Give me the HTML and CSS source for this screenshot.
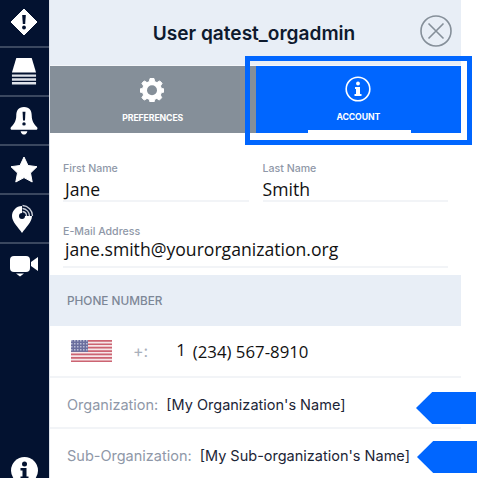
FILE: index.html
```html
<!DOCTYPE html>
<html lang="en">
<head>
    <meta charset="UTF-8">
    <meta name="viewport" content="width=device-width, initial-scale=1.0">
    <title>User qatest_orgadmin</title>
    <link rel="stylesheet" href="styles.css">
</head>
<body>
    <div class="app">
        <nav class="rail">
            <div class="rail-item rail-first">
                <svg width="28" height="28" viewBox="0 0 28 28">
                    <path d="M14 1 L27 14 L14 27 L1 14 Z" fill="#fff" stroke="#fff" stroke-width="1" stroke-linejoin="round"/>
                    <path d="M12.2 7 h3.6 l-.6 9 h-2.4 Z" fill="#031230"/>
                    <circle cx="14" cy="19.5" r="1.9" fill="#031230"/>
                </svg>
            </div>
            <div class="rail-item">
                <svg width="26" height="27" viewBox="0 0 26 28">
                    <path d="M5 0 H21 L25.500 15 H0.500 Z" fill="#fff"/>
                    <path d="M0.500 17 H25.500 V19.500 H0.500 Z M0.500 21 H25.500 V23.500 H0.500 Z M0.500 25 H25.500 V27.500 H0.500 Z" fill="#dfe3ea"/>
                </svg>
            </div>
            <div class="rail-item">
                <svg width="28" height="29" viewBox="0 0 28 30">
                    <path d="M14 1 C8 1 6 5 6 10 C6 16 3 19 0.500 22 C-0.500 23.500 0.500 24.500 1.500 24.500 H26.500 C27.500 24.500 28.500 23.500 27.500 22 C25 19 22 16 22 10 C22 5 20 1 14 1 Z" fill="#fff"/>
                    <path d="M10.500 26 H17.500 C17 28.500 15.500 29.500 14 29.500 C12.500 29.500 11 28.500 10.500 26 Z" fill="#fff"/>
                    <path d="M12.500 6 h3 l-.5 9 h-2 Z" fill="#031230"/>
                    <circle cx="14" cy="18.500" r="1.800" fill="#031230"/>
                </svg>
            </div>
            <div class="rail-item">
                <svg width="28" height="27" viewBox="0 0 28 27">
                    <path d="M14 1 L18 9.500 L27 10.700 L20.500 17 L22.200 26 L14 21.600 L5.800 26 L7.500 17 L1 10.700 L10 9.500 Z" fill="#fff" stroke="#fff" stroke-width="1" stroke-linejoin="round"/>
                </svg>
            </div>
            <div class="rail-item">
                <svg width="24" height="29" viewBox="0 0 24 29">
                    <path d="M10 2 C4 2 0 7 0 12 C0 18 6 23 10 29 C14 23 20 18 20 12 C20 7 16 2 10 2 Z" fill="#fff"/>
                    <path d="M10 12 L10 0 L24 0 L24 12 Z" fill="#031230"/>
                    <circle cx="10" cy="12" r="3" fill="#031230"/>
                    <path d="M10.500 7.500 A4.500 4.500 0 0 1 14.500 12 M10.500 4.500 A7.500 7.500 0 0 1 17.500 12 M10.500 1.500 A10.500 10.500 0 0 1 20.500 12" fill="none" stroke="#c9ced8" stroke-width="1.300"/>
                </svg>
            </div>
            <div class="rail-item rail-last">
                <svg width="28" height="26" viewBox="0 0 28 26">
                    <rect x="0" y="1" width="20" height="16" rx="4" fill="#fff"/>
                    <path d="M21 7 L28 2 V16 L21 11 Z" fill="#fff"/>
                    <path d="M6 18.500 H14 L10 21.500 Z" fill="#fff"/>
                </svg>
            </div>
            <div class="rail-foot">
                <svg width="27" height="27" viewBox="0 0 27 27">
                    <circle cx="13.500" cy="13.500" r="13.500" fill="#fff"/>
                    <circle cx="13.500" cy="7" r="2.500" fill="#031230"/>
                    <path d="M9.500 11 H15.500 V19.500 H17.500 V22 H9.500 V19.500 H11.500 V13.500 H9.500 Z" fill="#031230"/>
                </svg>
            </div>
        </nav>

        <main class="panel">
            <header class="panel-head">
                <h1 class="panel-title">User qatest_orgadmin</h1>
                <svg class="close-icon" width="32" height="32" viewBox="0 0 32 32">
                    <circle cx="16" cy="16" r="15" fill="none" stroke="#858f99" stroke-width="1.600"/>
                    <path d="M8.500 8.500 L23.500 23.500 M23.500 8.500 L8.500 23.500" stroke="#858f99" stroke-width="1.600"/>
                </svg>
            </header>

            <div class="tabs">
                <div class="tab tab-prefs">
                    <svg width="24" height="24" viewBox="0 0 24 24">
                        <path d="M10 0.500 H14 L14.600 3.600 L17 4.600 L19.700 2.900 L22.100 5.300 L20.400 8 L21.400 10.400 L24 11 V14 L21.400 14.600 L20.400 17 L21.700 19.700 L19.300 22.100 L16.800 20.400 L14.600 21.400 L14 24 H10 L9.400 21.400 L7 20.400 L4.300 22.100 L1.900 19.700 L3.600 17 L2.600 14.600 L0 14 V11 L2.600 10.400 L3.600 8 L1.900 5.300 L4.300 2.900 L7 4.600 L9.400 3.600 Z" fill="#fff" stroke="#fff" stroke-linejoin="round"/>
                        <circle cx="12" cy="12.300" r="5" fill="#858f99"/>
                    </svg>
                    <span class="tab-label">PREFERENCES</span>
                </div>
                <div class="tab tab-account">
                    <svg width="26" height="26" viewBox="0 0 26 26">
                        <circle cx="13" cy="13" r="11.800" fill="none" stroke="#fff" stroke-width="1.600"/>
                        <circle cx="13" cy="7.500" r="1.900" fill="#fff"/>
                        <path d="M10 11 H15 V18 H16.500 V20 H9.500 V18 H11 V13 H10 Z" fill="#fff"/>
                    </svg>
                    <span class="tab-label">ACCOUNT</span>
                    <span class="tab-marker"></span>
                </div>
            </div>

            <section class="form">
                <div class="field-row">
                    <div class="field">
                        <label class="field-label">First Name</label>
                        <div class="field-value">Jane</div>
                    </div>
                    <div class="field">
                        <label class="field-label">Last Name</label>
                        <div class="field-value field-value-flush">Smith</div>
                    </div>
                </div>
                <div class="field field-email">
                    <label class="field-label">E-Mail Address</label>
                    <div class="field-value">jane.smith@yourorganization.org</div>
                </div>
            </section>

            <div class="section-head">PHONE NUMBER</div>

            <div class="phone-row">
                <svg class="flag" width="41" height="22" viewBox="0 0 41 22">
                    <defs>
                        <pattern id="stars" width="3" height="3" patternUnits="userSpaceOnUse">
                            <rect width="3" height="3" fill="#6a6f9e"/>
                            <rect width="1.500" height="1.500" fill="#b9bcd4"/>
                        </pattern>
                    </defs>
                    <rect width="41" height="22" fill="#f6e6e8"/>
                    <path d="M0 0 H41 V1.700 H0 Z M0 3.400 H41 V5.100 H0 Z M0 6.800 H41 V8.500 H0 Z M0 10.200 H41 V11.900 H0 Z M0 13.600 H41 V15.300 H0 Z M0 17 H41 V18.700 H0 Z M0 20.400 H41 V22 H0 Z" fill="#cc6472"/>
                    <rect width="17" height="11.900" fill="url(#stars)"/>
                </svg>
                <span class="phone-plus">+:</span>
                <span class="phone-code">1</span>
                <span class="phone-number">(234) 567-8910</span>
            </div>

            <div class="org-row">
                <span class="org-label">Organization:</span>
                <span class="org-value">[My Organization's Name]</span>
            </div>
            <div class="org-row org-row-last">
                <span class="org-label">Sub-Organization:</span>
                <span class="org-value">[My Sub-organization's Name]</span>
            </div>
        </main>

        <!-- annotations drawn over the screenshot -->
        <div class="callout-frame"></div>
        <div class="callout-arrow arrow-org"></div>
        <div class="callout-arrow arrow-suborg"></div>
    </div>
</body>
</html>
```

FILE: styles.css
```css
html, body {
    margin: 0;
    padding: 0;
    background: #fff;
}
body {
    font-family: "Inter", "Liberation Sans", sans-serif;
    overflow: hidden;
}
.app {
    position: relative;
    display: flex;
    width: 485px;
    height: 478px;
    overflow: hidden;
}

/* left icon rail */
.rail {
    display: flex;
    flex-direction: column;
    width: 49px;
    height: 478px;
    background: #031230;
    border-right: 1px solid #dfe3ea;
}
.rail-item {
    display: flex;
    align-items: center;
    justify-content: center;
    height: 47px;
    padding-right: 1px;
    border-bottom: 2px solid #3a475f;
}
.rail-first {
    height: 43px;
    padding-bottom: 3px;
}
.rail-last {
    border-bottom: none;
}
.rail-foot {
    display: flex;
    justify-content: center;
    margin-top: auto;
    height: 21px;
}

/* main panel */
.panel {
    width: 411px;
    flex: none;
}
.panel-head {
    position: relative;
    display: flex;
    align-items: center;
    justify-content: center;
    height: 65px;
    background: #e8eef6;
    border-bottom: 1px solid #f4f6fa;
}
.panel-title {
    margin: 0;
    font-size: 19.100px;
    font-weight: 600;
    color: #0e1a2e;
    padding-right: 3px;
}
.close-icon {
    position: absolute;
    right: 9px;
    top: 15px;
}

.tabs {
    display: flex;
    height: 67px;
}
.tab {
    position: relative;
    display: flex;
    flex-direction: column;
    align-items: center;
    flex: 1;
    color: #fff;
}
.tab-prefs {
    background: #858f99;
    padding-top: 12px;
    gap: 11px;
}
.tab-account {
    background: #0066ff;
    padding-top: 10px;
    gap: 10px;
}
.tab-prefs svg {
    margin-right: 2px;
}
.tab-label {
    font-size: 8.700px;
    font-weight: 700;
    line-height: 10px;
    letter-spacing: -0.100px;
}
.tab-marker {
    position: absolute;
    left: 52px;
    bottom: 0;
    width: 103px;
    height: 3px;
    background: #fff;
}

.form {
    padding: 30px 13px 0;
    height: 142px;
    box-sizing: border-box;
}
.field-row {
    display: flex;
    gap: 14px;
}
.field {
    flex: 1;
    border-bottom: 2px solid #f2f4f7;
    height: 37px;
}
.field-email {
    margin-top: 24px;
    width: 385px;
    height: 40px;
    flex: none;
}
.field-label {
    display: block;
    font-size: 10.600px;
    font-weight: 500;
    line-height: 12px;
    color: #8f98a8;
}
.field-value {
    font-family: "Open Sans", "Liberation Sans", sans-serif;
    font-size: 17.600px;
    line-height: 22px;
    color: #111;
    padding-left: 2px;
    margin-top: 3px;
}
.field-value-flush {
    padding-left: 0;
}
.field-email .field-value {
    margin-top: 0;
}

.section-head {
    display: flex;
    align-items: center;
    height: 51px;
    padding-left: 17px;
    background: #e8eef6;
    font-size: 11.800px;
    font-weight: 500;
    color: #7d8797;
}

.phone-row {
    display: flex;
    align-items: center;
    height: 50px;
    padding-left: 21px;
    border-bottom: 2px solid #f2f4f7;
}
.phone-plus {
    margin-left: 21px;
    font-size: 16px;
    color: #a9b0bb;
}
.phone-code {
    margin-left: 28px;
    font-family: "Open Sans", "Liberation Sans", sans-serif;
    font-size: 16.800px;
    color: #111;
    margin-top: -3px;
}
.phone-number {
    margin-left: 7px;
    font-family: "Open Sans", "Liberation Sans", sans-serif;
    font-size: 16.800px;
    color: #111;
}

.org-row {
    display: flex;
    align-items: center;
    gap: 8px;
    height: 45px;
    padding: 4px 0 0 17px;
    border-bottom: 2px solid #f2f4f7;
    font-size: 14.500px;
    white-space: nowrap;
}
.org-row-last {
    border-bottom: none;
}
.org-label {
    color: #8f98a8;
}
.org-value {
    color: #1c2536;
}

/* annotations */
.callout-frame {
    position: absolute;
    left: 245px;
    top: 56px;
    width: 227px;
    height: 89px;
    box-sizing: border-box;
    border: 5px solid #0066ff;
}
.callout-arrow {
    position: absolute;
    width: 60px;
    height: 32px;
    background: #0066ff;
    clip-path: polygon(0 50%, 27% 0, 100% 0, 100% 100%, 27% 100%);
}
.arrow-org {
    left: 416px;
    top: 392px;
}
.arrow-suborg {
    left: 417px;
    top: 441px;
}
```
